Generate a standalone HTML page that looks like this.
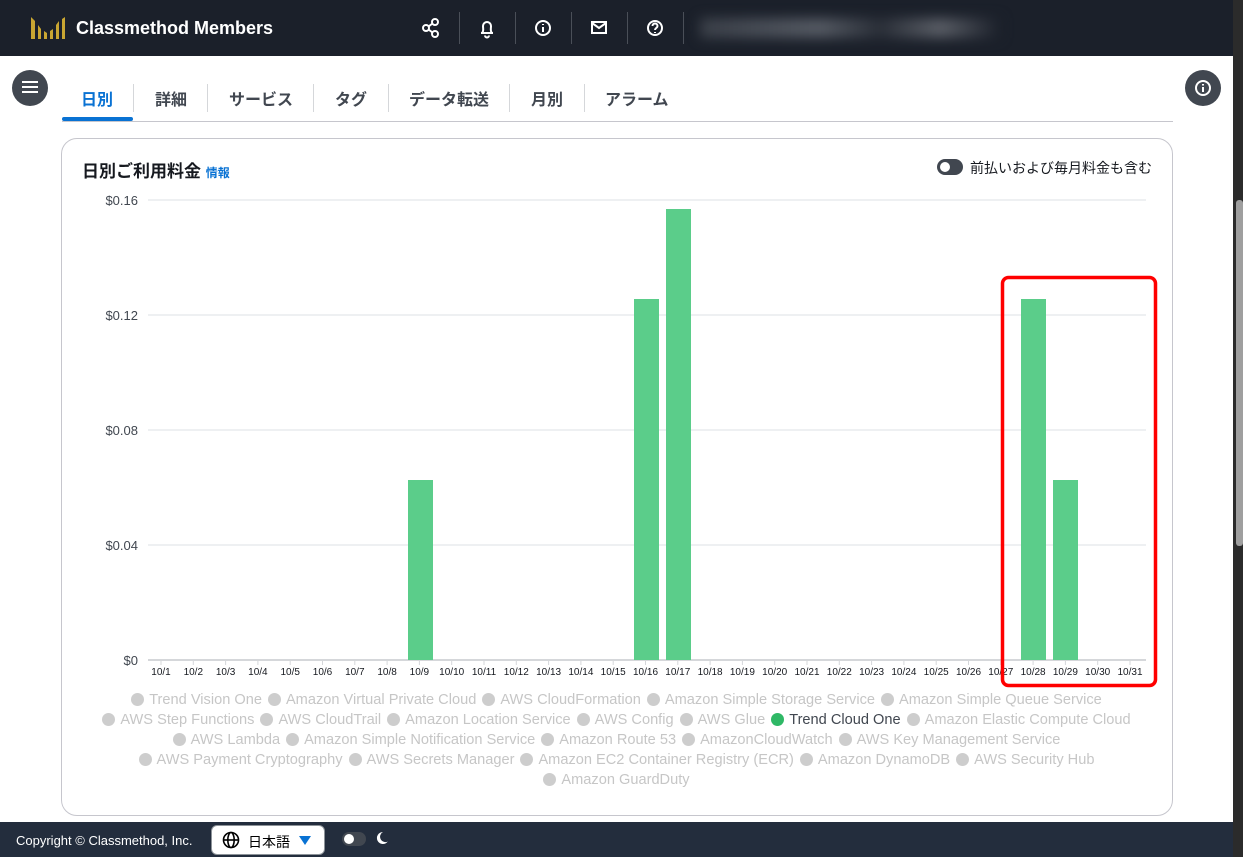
<!DOCTYPE html>
<html><head><meta charset="utf-8"><style>
*{margin:0;padding:0;box-sizing:border-box}
body{width:1243px;height:857px;overflow:hidden;background:#fff;font-family:"Liberation Sans","Noto Sans CJK JP",sans-serif;position:relative}
.abs{position:absolute}
.hdr{left:0;top:0;width:1233px;height:56px;background:#1b202a}
.div{width:1px;height:32px;top:12px;background:#4a4f58}
.tab{top:86px;font-size:16px;font-weight:bold;color:#414750;white-space:nowrap}
.tsep{top:84px;width:1px;height:28px;background:#d5d7da}
.leg{left:61px;width:1111px;text-align:center;font-size:14.6px;color:#c6c6c6;white-space:nowrap;line-height:20px}
.leg span{margin:0 3px}
.leg i{display:inline-block;width:13px;height:13px;border-radius:50%;background:#cdcdcd;vertical-align:-2px;margin-right:5px}
</style></head><body>
<div class="abs hdr"></div>
<svg class="abs" style="left:31px;top:17px" width="34" height="22" viewBox="0 0 34 22"><g fill="#c9a632"><polygon points="0,0 4,4 4,22 0,22"/><polygon points="7,8 10,12 10,22 7,22"/><polygon points="13,14 16,16 16,22 13,22"/><polygon points="19,14 22,12 22,22 19,22"/><polygon points="25,8 28,4 28,22 25,22"/><polygon points="31,2 34,0 34,22 31,22"/></g></svg>
<div class="abs" style="left:76px;top:18px;color:#fff;font-size:18px;font-weight:bold">Classmethod Members</div>
<svg class="abs" style="left:420px;top:17px" width="246" height="22" viewBox="0 0 246 22" fill="none" stroke="#fff" stroke-width="2">
<circle cx="6" cy="11" r="3"/><circle cx="15" cy="5" r="3"/><circle cx="15" cy="17" r="3"/><path d="M8.5 9.5l4-3M8.5 12.5l4 3"/>
<path d="M61 16h12M62 16c2-2 1-4 1-7a4 4 0 018 0c0 3-1 5 1 7M65 18.5a2 2 0 004 0"/>
<circle cx="123" cy="11" r="7"/><path d="M123 10v5M123 7v1"/>
<rect x="172" y="5" width="14" height="11"/><path d="M172 6l7 5 7-5"/>
<circle cx="235" cy="11" r="7"/><path d="M232.5 9a2.5 2.5 0 115 0c0 2-2.5 2-2.5 4M235 15v1"/>
</svg>
<div class="abs div" style="left:459px"></div><div class="abs div" style="left:515px"></div><div class="abs div" style="left:571px"></div><div class="abs div" style="left:627px"></div><div class="abs div" style="left:683px"></div>
<div class="abs" style="left:700px;top:18px;width:300px;height:20px;filter:blur(6px);background:linear-gradient(90deg,#3a3f48,#555a63 40%,#2a2f38 60%,#5a5e66 80%,#1b202a)"></div>
<div class="abs" style="left:1233px;top:0;width:10px;height:857px;background:#2b2b2b"></div>
<div class="abs" style="left:1236px;top:200px;width:7px;height:346px;background:#9f9f9f;border-radius:3px"></div>

<div class="abs" style="left:12px;top:70px;width:36px;height:36px;border-radius:50%;background:#414750"></div>
<div class="abs" style="left:22px;top:81px;width:16px;height:2px;background:#fff;box-shadow:0 5px #fff,0 10px #fff"></div>
<div class="abs" style="left:1185px;top:70px;width:36px;height:36px;border-radius:50%;background:#414750"></div>
<svg class="abs" style="left:1193px;top:78px" width="20" height="20" viewBox="0 0 20 20"><circle cx="10" cy="10" r="7" fill="none" stroke="#fff" stroke-width="2"/><path d="M10 9v5M10 6v1.5" stroke="#fff" stroke-width="2"/></svg>

<div class="abs tab" style="left:81px;color:#0972d3">日別</div>
<div class="abs" style="left:62px;top:117px;width:71px;height:4px;border-radius:2px;background:#0972d3"></div>
<div class="abs tsep" style="left:133px"></div>
<div class="abs tab" style="left:155px">詳細</div>
<div class="abs tsep" style="left:207px"></div>
<div class="abs tab" style="left:229px">サービス</div>
<div class="abs tsep" style="left:313px"></div>
<div class="abs tab" style="left:335px">タグ</div>
<div class="abs tsep" style="left:388px"></div>
<div class="abs tab" style="left:409px">データ転送</div>
<div class="abs tsep" style="left:509px"></div>
<div class="abs tab" style="left:531px">月別</div>
<div class="abs tsep" style="left:584px"></div>
<div class="abs tab" style="left:605px">アラーム</div>
<div class="abs" style="left:62px;top:121px;width:1111px;height:1px;background:#c6c6cd"></div>

<div class="abs" style="left:61px;top:138px;width:1112px;height:678px;border:1px solid #c6c6cd;border-radius:16px"></div>
<div class="abs" style="left:82px;top:157px;font-size:17px;font-weight:bold;color:#16191f">日別ご利用料金 <span style="font-size:12px;color:#0972d3">情報</span></div>
<div class="abs" style="left:937px;top:159px;width:26px;height:16px;border-radius:8px;background:#414750"></div>
<div class="abs" style="left:940px;top:162px;width:10px;height:10px;border-radius:50%;background:#fff"></div>
<div class="abs" style="left:970px;top:158px;font-size:14px;color:#16191f">前払いおよび毎月料金も含む</div>

<svg class="abs" style="left:0;top:0" width="1233" height="700" font-family="Liberation Sans, sans-serif">
<g stroke="#e9ebed" stroke-width="1.5"><path d="M148 200H1146M148 315H1146M148 430H1146M148 545H1146"/></g>
<path d="M148 660H1146" stroke="#d5d7da" stroke-width="2"/>
<g fill="#414750" font-size="13" text-anchor="end"><text x="138" y="205">$0.16</text><text x="138" y="320">$0.12</text><text x="138" y="435">$0.08</text><text x="138" y="550">$0.04</text><text x="138" y="665">$0</text></g>
<g fill="#5bcd8a"><rect x="408" y="480" width="25" height="180"/><rect x="634" y="299" width="25" height="361"/><rect x="666" y="209" width="25" height="451"/><rect x="1021" y="299" width="25" height="361"/><rect x="1053" y="480" width="25" height="180"/></g>
<g id="xl" fill="#16191f" font-size="10" text-anchor="middle"></g>
<rect x="1002.5" y="277.5" width="153" height="408" rx="6" fill="none" stroke="#f00" stroke-width="3.5"/>
</svg>
<script>
var g=document.getElementById('xl'),s='';
for(var i=0;i<31;i++){var x=161+i*32.3;s+='<text x="'+x+'" y="675">10/'+(i+1)+'</text><line x1="'+x+'" y1="660" x2="'+x+'" y2="665" stroke="#d5d7da"/>';}
g.innerHTML=s;
</script>

<div class="abs leg" style="top:690px"><span><i></i>Trend Vision One</span><span><i></i>Amazon Virtual Private Cloud</span><span><i></i>AWS CloudFormation</span><span><i></i>Amazon Simple Storage Service</span><span><i></i>Amazon Simple Queue Service</span></div>
<div class="abs leg" style="top:710px"><span><i></i>AWS Step Functions</span><span><i></i>AWS CloudTrail</span><span><i></i>Amazon Location Service</span><span><i></i>AWS Config</span><span><i></i>AWS Glue</span><span style="color:#414750"><i style="background:#2fb866"></i>Trend Cloud One</span><span><i></i>Amazon Elastic Compute Cloud</span></div>
<div class="abs leg" style="top:730px"><span><i></i>AWS Lambda</span><span><i></i>Amazon Simple Notification Service</span><span><i></i>Amazon Route 53</span><span><i></i>AmazonCloudWatch</span><span><i></i>AWS Key Management Service</span></div>
<div class="abs leg" style="top:750px"><span><i></i>AWS Payment Cryptography</span><span><i></i>AWS Secrets Manager</span><span><i></i>Amazon EC2 Container Registry (ECR)</span><span><i></i>Amazon DynamoDB</span><span><i></i>AWS Security Hub</span></div>
<div class="abs leg" style="top:770px"><span><i></i>Amazon GuardDuty</span></div>

<div class="abs" style="left:0;top:822px;width:1233px;height:35px;background:#232d3d"></div>
<div class="abs" style="left:16px;top:833px;font-size:13px;color:#fff">Copyright © Classmethod, Inc.</div>
<div class="abs" style="left:211px;top:825px;width:114px;height:30px;background:#fff;border-radius:6px;border:1px solid #8d9399"></div>
<svg class="abs" style="left:222px;top:831px" width="18" height="18" viewBox="0 0 18 18" fill="none" stroke="#000" stroke-width="1.6"><circle cx="9" cy="9" r="7.5"/><ellipse cx="9" cy="9" rx="3.2" ry="7.5"/><path d="M1.5 9h15"/></svg>
<div class="abs" style="left:248px;top:832px;font-size:14px;color:#000">日本語</div>
<div class="abs" style="left:299px;top:836px;width:0;height:0;border-left:6px solid transparent;border-right:6px solid transparent;border-top:9px solid #0972d3"></div>
<div class="abs" style="left:342px;top:832px;width:24px;height:14px;border-radius:7px;background:#414750"></div>
<div class="abs" style="left:344px;top:834px;width:10px;height:10px;border-radius:50%;background:#fff"></div>
<svg class="abs" style="left:375px;top:831px" width="14" height="14" viewBox="0 0 14 14"><path d="M8 1a6 6 0 104.8 9.5A5 5 0 018 1z" fill="#fff"/></svg>
</body></html>
